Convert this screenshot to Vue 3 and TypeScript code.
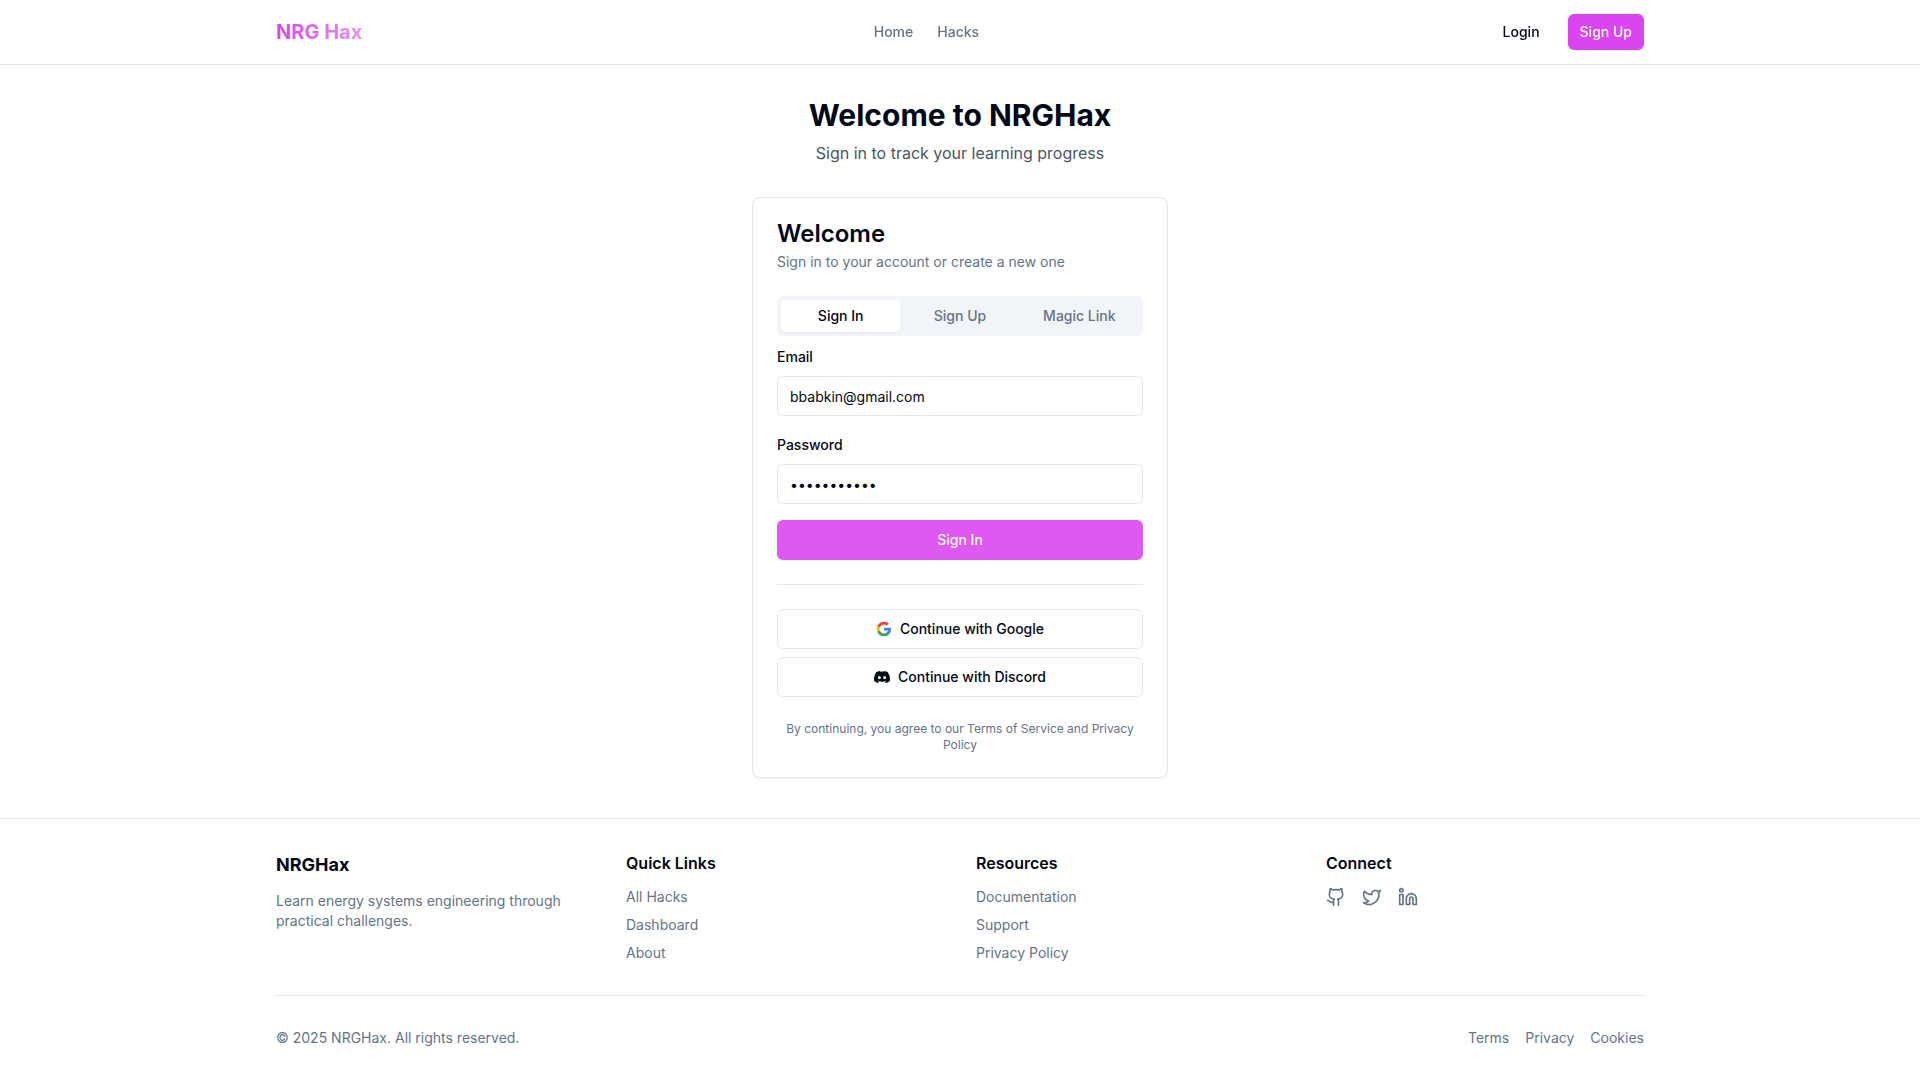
<script setup lang="ts">
import { ref } from 'vue'

interface LinkGroup {
  title: string
  links: string[]
}

const tabs = ['Sign In', 'Sign Up', 'Magic Link']
const activeTab = ref('Sign In')
const email = ref('bbabkin@gmail.com')
const password = ref('hackenergy1')

const groups: LinkGroup[] = [
  { title: 'Quick Links', links: ['All Hacks', 'Dashboard', 'About'] },
  { title: 'Resources', links: ['Documentation', 'Support', 'Privacy Policy'] },
]
const legal = ['Terms', 'Privacy', 'Cookies']
</script>

<template>
  <div class="page">
    <header class="site-header">
      <div class="container header-row">
        <a href="#" class="logo">NRG Hax</a>
        <nav class="main-nav">
          <a href="#">Home</a>
          <a href="#">Hacks</a>
        </nav>
        <div class="header-actions">
          <button type="button" class="btn btn-small btn-ghost">Login</button>
          <button type="button" class="btn btn-small btn-primary">Sign Up</button>
        </div>
      </div>
    </header>

    <main class="content">
      <div class="intro">
        <h1>Welcome to NRGHax</h1>
        <p>Sign in to track your learning progress</p>
      </div>

      <section class="card">
        <div class="card-header">
          <h2>Welcome</h2>
          <p>Sign in to your account or create a new one</p>
        </div>

        <div class="tabs" role="tablist">
          <button
            v-for="tab in tabs"
            :key="tab"
            type="button"
            role="tab"
            class="tab"
            :class="{ active: tab === activeTab }"
            :aria-selected="tab === activeTab"
            @click="activeTab = tab"
          >
            {{ tab }}
          </button>
        </div>

        <form class="form" @submit.prevent>
          <div class="field">
            <div class="label-row"><label for="email">Email</label></div>
            <input id="email" v-model="email" type="email" />
          </div>
          <div class="field">
            <div class="label-row"><label for="password">Password</label></div>
            <input id="password" v-model="password" type="password" />
          </div>
          <button type="submit" class="btn btn-submit">Sign In</button>
        </form>

        <hr class="divider" />

        <div class="providers">
          <button type="button" class="btn btn-outline">
            <svg class="provider-icon" viewBox="0 0 24 24" aria-hidden="true">
              <path fill="#4285F4" d="M22.56 12.25c0-.78-.07-1.53-.2-2.25H12v4.26h5.92c-.26 1.37-1.04 2.53-2.21 3.31v2.77h3.57c2.08-1.92 3.28-4.74 3.28-8.09z" />
              <path fill="#34A853" d="M12 23c2.97 0 5.46-.98 7.28-2.66l-3.57-2.77c-.98.66-2.23 1.06-3.71 1.06-2.86 0-5.29-1.93-6.16-4.53H2.18v2.84C3.99 20.53 7.7 23 12 23z" />
              <path fill="#FBBC05" d="M5.84 14.09c-.22-.66-.35-1.36-.35-2.09s.13-1.43.35-2.09V7.07H2.18C1.43 8.55 1 10.22 1 12s.43 3.45 1.18 4.93l2.85-2.22.81-.62z" />
              <path fill="#EA4335" d="M12 5.38c1.62 0 3.06.56 4.21 1.64l3.15-3.15C17.45 2.09 14.97 1 12 1 7.7 1 3.99 3.47 2.18 7.07l3.66 2.84c.87-2.6 3.3-4.53 6.16-4.53z" />
            </svg>
            Continue with Google
          </button>
          <button type="button" class="btn btn-outline">
            <svg class="provider-icon" viewBox="0 0 24 24" fill="currentColor" aria-hidden="true">
              <path d="M20.317 4.3698a19.7913 19.7913 0 00-4.8851-1.5152.0741.0741 0 00-.0785.0371c-.211.3753-.4447.8648-.6083 1.2495-1.8447-.2762-3.68-.2762-5.4868 0-.1636-.3933-.4058-.8742-.6177-1.2495a.077.077 0 00-.0785-.037 19.7363 19.7363 0 00-4.8852 1.515.0699.0699 0 00-.0321.0277C.5334 9.0458-.319 13.5799.0992 18.0578a.0824.0824 0 00.0312.0561c2.0528 1.5076 4.0413 2.4228 5.9929 3.0294a.0777.0777 0 00.0842-.0276c.4616-.6304.8731-1.2952 1.226-1.9942a.076.076 0 00-.0416-.1057c-.6528-.2476-1.2743-.5495-1.8722-.8923a.077.077 0 01-.0076-.1277c.1258-.0943.2517-.1923.3718-.2914a.0743.0743 0 01.0776-.0105c3.9278 1.7933 8.18 1.7933 12.0614 0a.0739.0739 0 01.0785.0095c.1202.099.246.1981.3728.2924a.077.077 0 01-.0066.1276 12.2986 12.2986 0 01-1.873.8914.0766.0766 0 00-.0407.1067c.3604.698.7719 1.3628 1.225 1.9932a.076.076 0 00.0842.0286c1.961-.6067 3.9495-1.5219 6.0023-3.0294a.077.077 0 00.0313-.0552c.5004-5.177-.8382-9.6739-3.5485-13.6604a.061.061 0 00-.0312-.0286zM8.02 15.3312c-1.1825 0-2.1569-1.0857-2.1569-2.419 0-1.3332.9555-2.4189 2.157-2.4189 1.2108 0 2.1757 1.0952 2.1568 2.419 0 1.3332-.9555 2.4189-2.1569 2.4189zm7.9748 0c-1.1825 0-2.1569-1.0857-2.1569-2.419 0-1.3332.9554-2.4189 2.1569-2.4189 1.2108 0 2.1757 1.0952 2.1568 2.419 0 1.3332-.946 2.4189-2.1568 2.4189z" />
            </svg>
            Continue with Discord
          </button>
        </div>

        <p class="terms">By continuing, you agree to our Terms of Service and Privacy Policy</p>
      </section>
    </main>

    <footer class="site-footer">
      <div class="container">
        <div class="footer-grid">
          <div>
            <h3 class="brand">NRGHax</h3>
            <p class="muted">Learn energy systems engineering through practical challenges.</p>
          </div>
          <div v-for="group in groups" :key="group.title">
            <h4>{{ group.title }}</h4>
            <ul class="link-list">
              <li v-for="link in group.links" :key="link">
                <a href="#">{{ link }}</a>
              </li>
            </ul>
          </div>
          <div>
            <h4>Connect</h4>
            <div class="social">
              <a href="#" aria-label="GitHub">
                <svg viewBox="0 0 24 24">
                  <path d="M15 22v-4a4.8 4.8 0 0 0-1-3.5c3 0 6-2 6-5.5.08-1.25-.27-2.48-1-3.5.28-1.15.28-2.35 0-3.5 0 0-1 0-3 1.5-2.64-.5-5.36-.5-8 0C6 2 5 2 5 2c-.3 1.15-.3 2.35 0 3.5A5.403 5.403 0 0 0 4 9c0 3.5 3 5.5 6 5.5-.39.49-.68 1.05-.85 1.65-.17.6-.22 1.23-.15 1.85v4" />
                  <path d="M9 18c-4.51 2-5-2-7-2" />
                </svg>
              </a>
              <a href="#" aria-label="Twitter">
                <svg viewBox="0 0 24 24">
                  <path d="M22 4s-.7 2.1-2 3.4c1.6 10-9.4 17.3-18 11.6 2.2.1 4.4-.6 6-2C3 15.5.5 9.6 3 5c2.2 2.6 5.6 4.1 9 4-.9-4.2 4-6.6 7-3.8 1.1 0 3-1.2 3-1.2z" />
                </svg>
              </a>
              <a href="#" aria-label="LinkedIn">
                <svg viewBox="0 0 24 24">
                  <path d="M16 8a6 6 0 0 1 6 6v7h-4v-7a2 2 0 0 0-2-2 2 2 0 0 0-2 2v7h-4v-7a6 6 0 0 1 6-6z" />
                  <rect width="4" height="12" x="2" y="9" />
                  <circle cx="4" cy="4" r="2" />
                </svg>
              </a>
            </div>
          </div>
        </div>

        <div class="footer-bottom">
          <p>© 2025 NRGHax. All rights reserved.</p>
          <nav class="legal">
            <a v-for="item in legal" :key="item" href="#">{{ item }}</a>
          </nav>
        </div>
      </div>
    </footer>
  </div>
</template>

<style>
body {
  margin: 0;
  background: #fff;
}
</style>

<style scoped>
.page,
.page * {
  box-sizing: border-box;
}

.page {
  display: flex;
  flex-direction: column;
  min-height: 100vh;
  font-family: Inter, "Liberation Sans", sans-serif;
  font-size: 16px;
  line-height: 24px;
  color: #020817;
}

h1,
h2,
h3,
h4,
p,
ul {
  margin: 0;
  padding: 0;
}

a {
  color: inherit;
  text-decoration: none;
}

.container {
  width: 100%;
  max-width: 1400px;
  margin: 0 auto;
  padding: 0 16px;
}

.site-header {
  position: sticky;
  top: 0;
  z-index: 10;
  border-bottom: 1px solid #e2e8f0;
  background: rgba(255, 255, 255, 0.95);
  backdrop-filter: blur(8px);
}

.header-row {
  display: flex;
  align-items: center;
  justify-content: space-between;
  height: 64px;
}

.logo {
  font-size: 20px;
  font-weight: 700;
  line-height: 28px;
  color: transparent;
  background: linear-gradient(to right, #d946ef, #e890f5);
  background-clip: text;
}

.main-nav {
  display: flex;
  gap: 24px;
  font-size: 14px;
  font-weight: 500;
  line-height: 20px;
  color: #64748b;
}

.header-actions {
  display: flex;
  gap: 16px;
}

.btn {
  display: flex;
  align-items: center;
  justify-content: center;
  gap: 8px;
  width: 100%;
  height: 40px;
  padding: 0 16px;
  border: 0;
  border-radius: 6px;
  font-family: inherit;
  font-size: 14px;
  font-weight: 500;
  line-height: 20px;
  color: #020817;
  background: transparent;
  cursor: pointer;
}

.btn-small {
  width: auto;
  height: 36px;
  padding: 0 12px;
}

.btn-primary {
  color: #f8fafc;
  background: #d946ef;
}

.btn-submit {
  color: #f8fafc;
  background: #dd59f1;
}

.btn-outline {
  border: 1px solid #e2e8f0;
  background: #fff;
}

.content {
  flex: 1;
  width: 100%;
  max-width: 448px;
  margin: 0 auto;
  padding: 32px 16px 40px;
}

.intro {
  margin-bottom: 32px;
  text-align: center;
}

.intro h1 {
  margin-bottom: 8px;
  font-size: 30px;
  font-weight: 700;
  line-height: 36px;
}

.intro p {
  color: #4b5563;
}

.card {
  padding: 24px;
  border: 1px solid #e2e8f0;
  border-radius: 8px;
  background: #fff;
  box-shadow: 0 1px 2px rgba(0, 0, 0, 0.05);
}

.card-header {
  display: flex;
  flex-direction: column;
  gap: 6px;
  margin-bottom: 24px;
}

.card-header h2 {
  font-size: 24px;
  font-weight: 600;
  line-height: 24px;
}

.card-header p {
  font-size: 14px;
  line-height: 20px;
  color: #64748b;
}

.tabs {
  display: grid;
  grid-template-columns: repeat(3, 1fr);
  height: 40px;
  margin-bottom: 8px;
  padding: 4px;
  border-radius: 6px;
  background: #f1f5f9;
}

.tab {
  padding: 0 12px;
  border: 0;
  border-radius: 4px;
  font-family: inherit;
  font-size: 14px;
  font-weight: 500;
  line-height: 20px;
  color: #64748b;
  background: transparent;
  cursor: pointer;
}

.tab.active {
  color: #020817;
  background: #fff;
  box-shadow: 0 1px 2px rgba(0, 0, 0, 0.05);
}

.form {
  display: flex;
  flex-direction: column;
  gap: 16px;
}

.field {
  display: flex;
  flex-direction: column;
  gap: 8px;
}

.label-row label {
  font-size: 14px;
  font-weight: 500;
  line-height: 14px;
}

.field input {
  width: 100%;
  height: 40px;
  padding: 8px 12px;
  border: 1px solid #e2e8f0;
  border-radius: 6px;
  font-family: inherit;
  font-size: 14px;
  line-height: 20px;
  color: #020817;
  background: #fff;
}

.divider {
  height: 0;
  margin: 24px 0;
  border: 0;
  border-top: 1px solid #e2e8f0;
}

.providers {
  display: flex;
  flex-direction: column;
  gap: 8px;
  margin-bottom: 24px;
}

.provider-icon {
  flex: none;
  width: 16px;
  height: 16px;
}

.terms {
  font-size: 12px;
  line-height: 16px;
  text-align: center;
  color: #64748b;
}

.site-footer {
  padding: 32px 0;
  border-top: 1px solid #e2e8f0;
}

.footer-grid {
  display: grid;
  grid-template-columns: repeat(4, 1fr);
  gap: 32px;
  margin-bottom: 32px;
}

.footer-grid h3,
.footer-grid h4 {
  margin-bottom: 12px;
}

.brand {
  font-size: 18px;
  font-weight: 700;
  line-height: 28px;
}

.footer-grid h4 {
  font-size: 16px;
  font-weight: 600;
  line-height: 24px;
}

.muted,
.link-list,
.footer-bottom {
  font-size: 14px;
  line-height: 20px;
  color: #64748b;
}

.link-list {
  display: flex;
  flex-direction: column;
  gap: 8px;
  list-style: none;
}

.social {
  display: flex;
  gap: 16px;
  color: #64748b;
}

.social svg {
  display: block;
  width: 20px;
  height: 20px;
  fill: none;
  stroke: currentColor;
  stroke-width: 2;
  stroke-linecap: round;
  stroke-linejoin: round;
}

.footer-bottom {
  display: flex;
  justify-content: space-between;
  padding-top: 32px;
  border-top: 1px solid #e2e8f0;
}

.legal {
  display: flex;
  gap: 16px;
}
</style>
